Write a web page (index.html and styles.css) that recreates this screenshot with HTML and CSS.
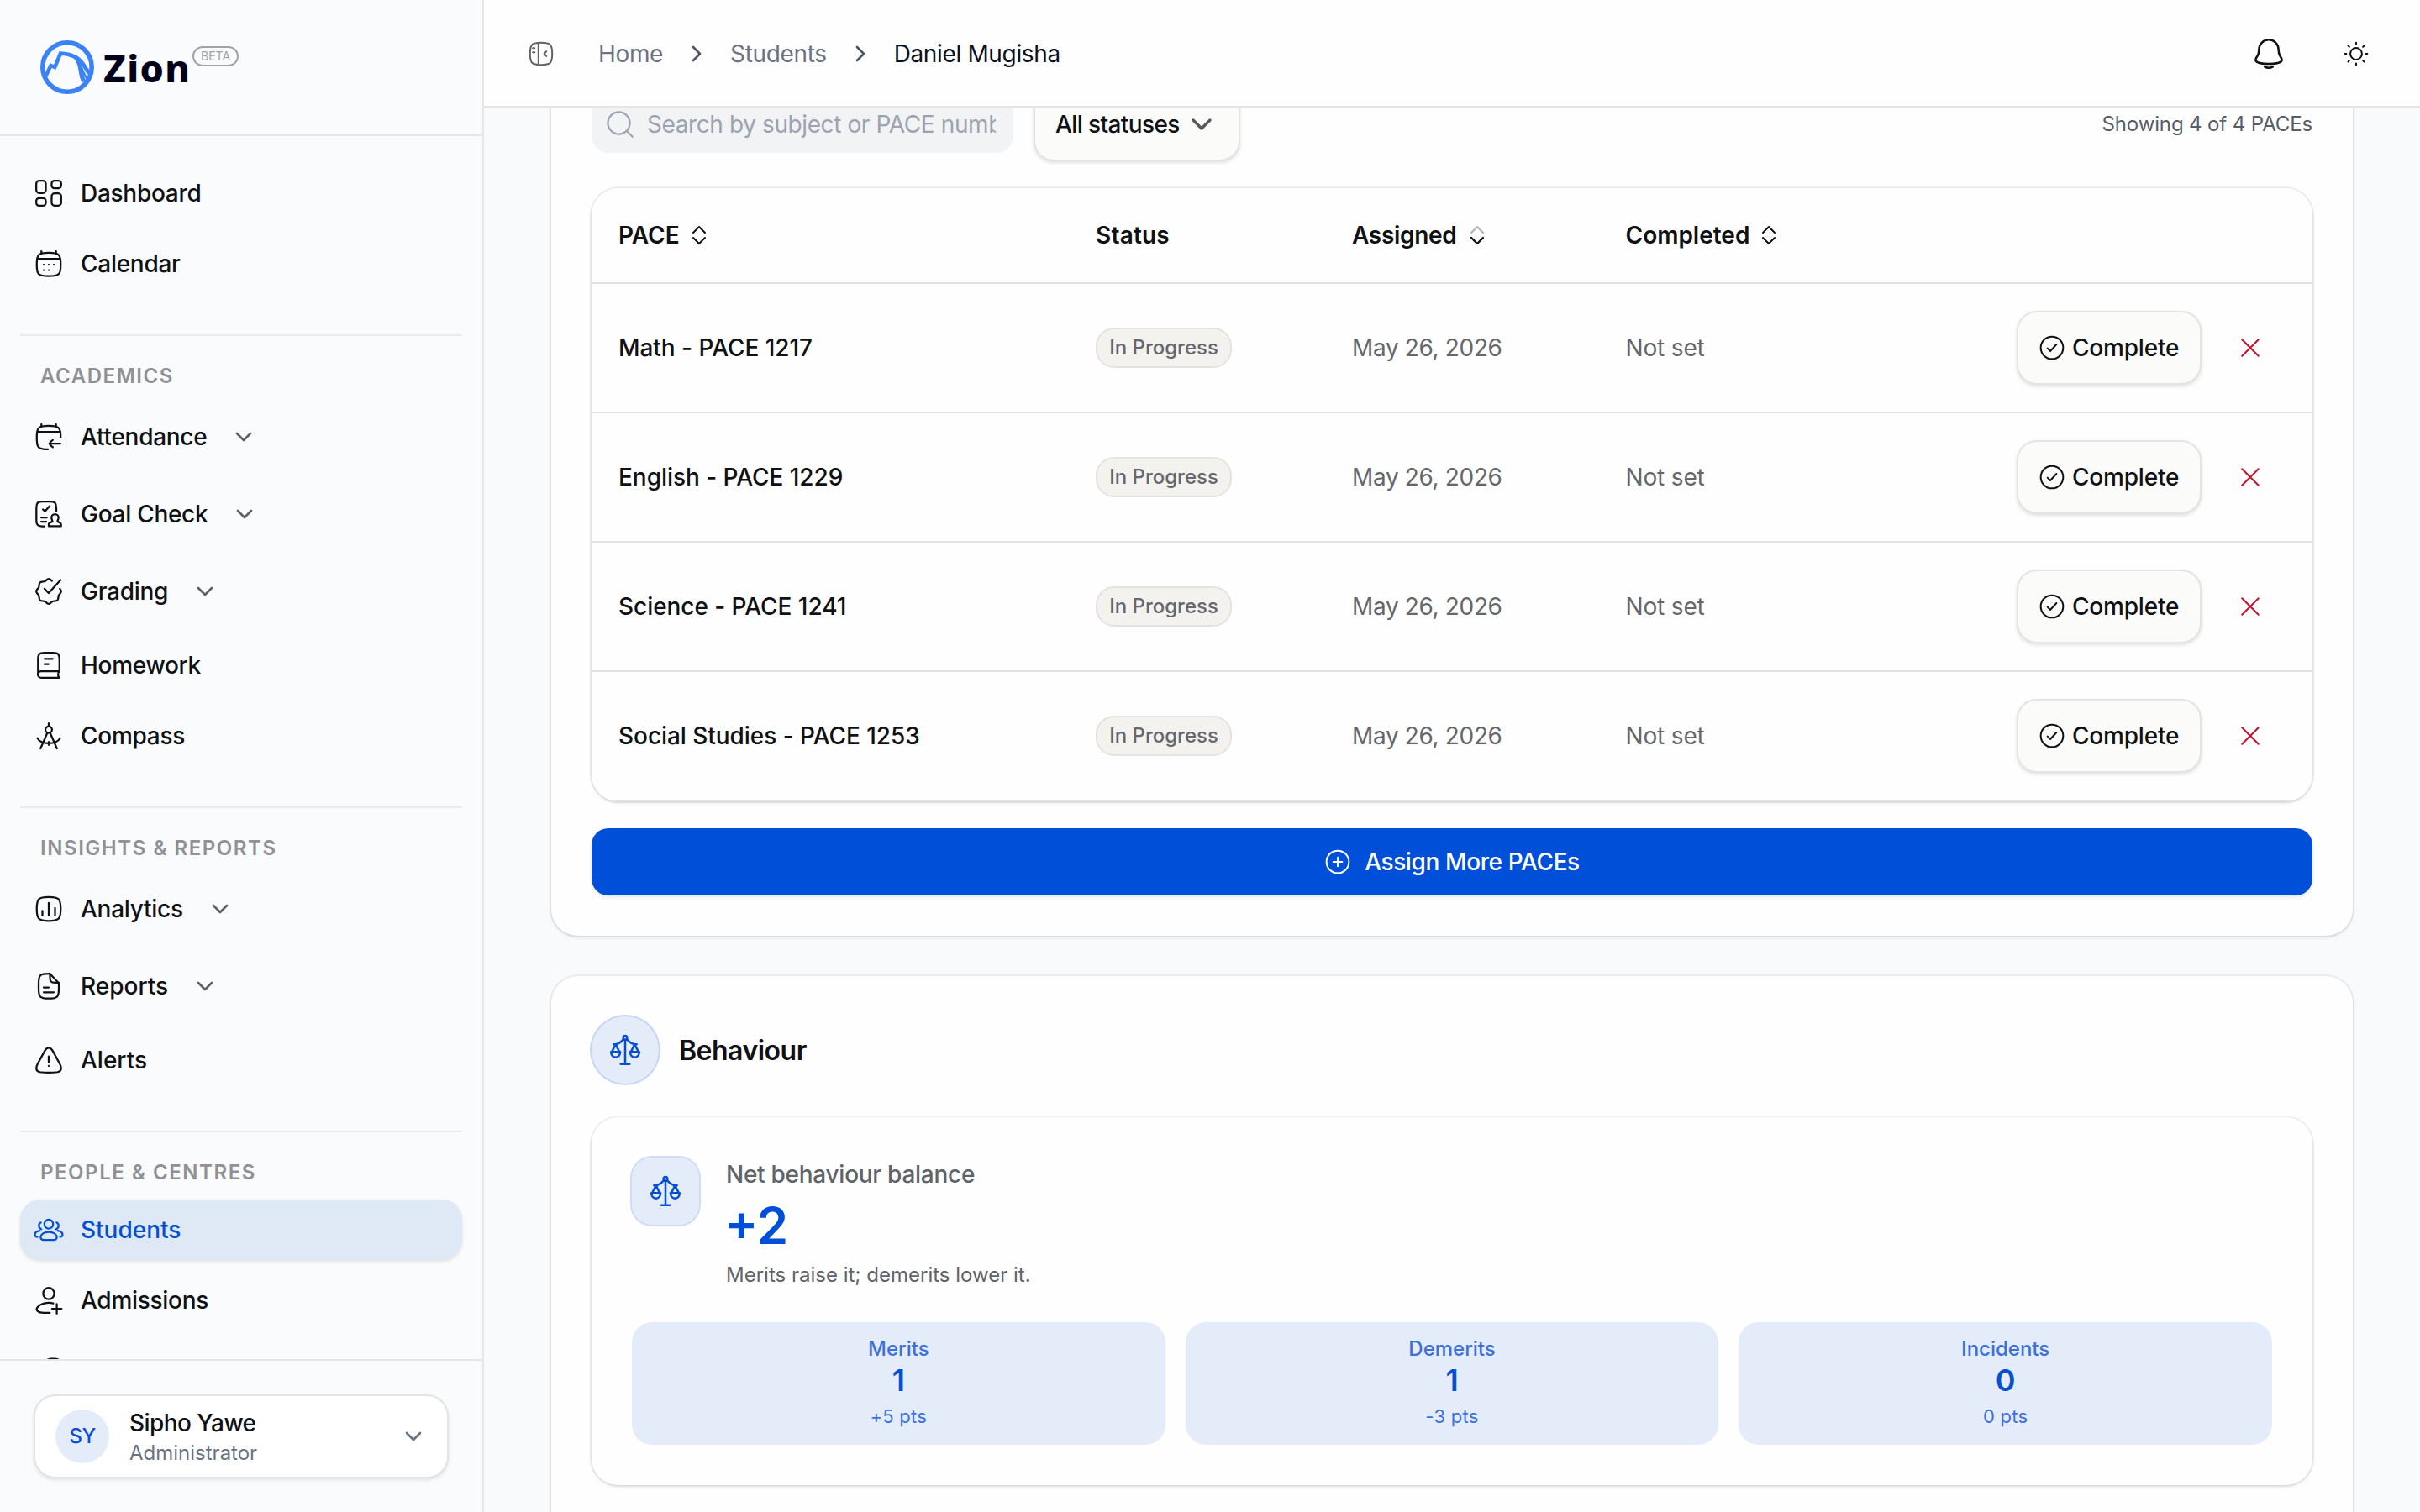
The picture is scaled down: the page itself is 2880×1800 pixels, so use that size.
FILE: index.html
```html
<!DOCTYPE html>
<html lang="en">
<head>
    <meta charset="UTF-8">
    <meta name="viewport" content="width=device-width, initial-scale=1.0">
    <title>Daniel Mugisha - Zion</title>
    <link rel="stylesheet" href="styles.css">
</head>
<body>
    <!-- Shared icons -->
    <svg class="sprite" width="0" height="0">
        <symbol id="i-dashboard" viewBox="0 0 24 24"><rect x="2.1" y="2.1" width="7.6" height="9.8" rx="2.4"/><rect x="14.3" y="2.1" width="7.6" height="6" rx="2.2"/><rect x="14.3" y="12.1" width="7.6" height="9.8" rx="2.4"/><rect x="2.1" y="15.9" width="7.6" height="6" rx="2.2"/></symbol>
        <symbol id="i-calendar" viewBox="0 0 24 24"><path d="M6.2 2v2.2M17.8 2v2.2M2.9 8h18.2"/><path d="M2.5 12.6c0-7.6.8-9.3 9.5-9.3s9.5 1.7 9.5 9.3-.8 9.2-9.5 9.2-9.5-1.6-9.5-9.2Z"/><path d="M8 12.7h.01M12 12.7h.01M16 12.7h.01M8 17h.01M12 17h.01"/></symbol>
        <symbol id="i-attendance" viewBox="0 0 24 24"><path d="M6.2 2v2.2M17.8 2v2.2M2.9 8h18.2"/><path d="M11.4 21.9c-8.1 0-8.9-1.7-8.9-9.3s.8-9.3 9.5-9.3 9.5 1.7 9.5 9.3"/><path d="M21.3 17.4h-8.7M15.2 14.6c-1.1.7-2.1 1.7-2.7 2.8.6 1.1 1.6 2.1 2.7 2.8"/></symbol>
        <symbol id="i-goal" viewBox="0 0 24 24"><path d="M18 9.6V7c0-3.8-1.1-5-4.8-5H7C3.3 2 2.2 3.2 2.2 7v10c0 3.7 1.1 4.7 6.3 4.8"/><path d="M7.4 8.3 9 9.8l3.7-4.2M6 14.7h4.5M6 18h4"/><path d="M14.2 14.8a2.8 2.8 0 0 1 5.6 0c0 1.5-.9 2.2-.9 3.2 1.6.5 2.9.5 2.9 2.4v1.2H12v-1.2c0-1.900 1.400-1.900 3-2.400 0-1-.8-1.700-.8-3.200Z"/></symbol>
        <symbol id="i-grading" viewBox="0 0 24 24"><path d="M14.6 3.7 13.3 2.6Q12 1.6 10.7 2.6L9.2 4 5.8 4.6Q4.8 4.9 4.6 5.9L4.1 8.9 2.5 10.8Q1.7 12 2.5 13.2L4.1 15.1 4.6 18.1Q4.8 19.1 5.8 19.4L9.2 20 10.7 21.4Q12 22.4 13.3 21.4L14.8 20 18.2 19.4Q19.2 19.1 19.4 18.1L19.9 15.1 21.5 13.2Q22.3 12 21.5 10.8L20.8 9.9"/><path d="m8.6 9.9 3.3 3.5L21.4 3"/></symbol>
        <symbol id="i-homework" viewBox="0 0 24 24"><path d="M20.5 16.7V7c0-3.8-1.2-5-5-5h-7c-3.8 0-5 1.2-5 5v12.4"/><path d="M20.5 16.7H6a2.6 2.6 0 0 0 0 5.2h14.5c-1.5-1.4-1.5-3.8 0-5.2ZM8.7 6.9h6.5M8.7 11.1h3.1"/></symbol>
        <symbol id="i-compass" viewBox="0 0 24 24"><circle cx="12" cy="7.2" r="2.6"/><path d="M12 4.5V2M10.9 9.7 5.5 22M13.1 9.7 18.5 22M3 13.8c3 5.4 15 5.4 18 0M12 16.8v2.4"/></symbol>
        <symbol id="i-analytics" viewBox="0 0 24 24"><path d="M2.5 12c0-7.8 1.2-9.5 9.5-9.5s9.5 1.7 9.5 9.5-1.2 9.5-9.5 9.5S2.5 19.8 2.5 12Z"/><path d="M7 13.5v3.6M12 7.2v9.9M17 11.3v5.8"/></symbol>
        <symbol id="i-reports" viewBox="0 0 24 24"><path d="M20 10.5V14c0 6.5-.9 7.8-8 7.8S4 20.5 4 14v-4C4 3.3 5 2.1 12 2.1h1L20 9.7Z"/><path d="M13 2.3V5c0 3.4.7 4.2 4 4.2h3M8 13h4M8 16.9h8"/></symbol>
        <symbol id="i-alert" viewBox="0 0 24 24"><path d="M12 2.2c-1.3 0-2.2.9-3 2.2L3.2 15c-1.6 3-1.5 6 1.8 6.5 4 .5 10 .5 14 0 3.3-.5 3.4-3.5 1.8-6.5L15 4.4c-.8-1.3-1.7-2.2-3-2.2Z"/><path d="M12 9v4.6M12 16.5v.1"/></symbol>
        <symbol id="i-students" viewBox="0 0 24 24"><ellipse cx="12" cy="7.5" rx="3.5" ry="3.6"/><path d="M5.6 17.9c0-2.4 2.9-4.2 6.4-4.2s6.4 1.8 6.4 4.2c0 1.5-1.2 2.2-2.6 2.2H8.2c-1.4 0-2.6-.7-2.6-2.2Z"/><path d="M5.8 6.2a2.9 2.9 0 0 0 .3 5.3M18.2 6.2a2.9 2.9 0 0 1-.3 5.3M4.9 12.8c-2.1.4-3.8 1.5-3.9 3 0 1 .7 1.7 2 1.9M19.1 12.8c2.1.4 3.8 1.5 3.9 3 0 1-.7 1.7-2 1.9"/></symbol>
        <symbol id="i-admissions" viewBox="0 0 24 24"><ellipse cx="12" cy="6.6" rx="4.4" ry="4.5"/><path d="M15.6 14.4c-4.6-1.2-10.4.2-12.7 3.4-1.4 2 .6 4.1 5.1 4.1h4.9M18.4 14.9v7.6M14.6 18.7h7.6"/></symbol>
        <symbol id="i-more" viewBox="0 0 24 24"><rect x="8" y="2.4" width="15" height="18" rx="6"/></symbol>
        <symbol id="i-down" viewBox="0 0 24 24"><path d="m6 9 6 6 6-6"/></symbol>
        <symbol id="i-right" viewBox="0 0 24 24"><path d="m9 6 6 6-6 6"/></symbol>
        <symbol id="i-panel" viewBox="0 0 24 24"><path d="M2.1 12c0-8.3 1.6-9.9 9.9-9.9s9.9 1.6 9.9 9.9-1.6 9.9-9.9 9.9S2.1 20.3 2.1 12ZM9.6 2.3v19.4M16.7 9.8 14.7 12l2 2.2M4.6 7h1.6M4.6 10.6h1.6"/></symbol>
        <symbol id="i-bell" viewBox="0 0 24 24"><path d="M12 2C8.2 2 5.2 5 5 8.9c-.1 1.9 0 2.9-.9 4.4-.6 1.1-1.5 2-1.5 3 0 2.1 5 2.9 9.4 2.9s9.4-.8 9.4-2.9c0-1-.9-1.9-1.5-3-.9-1.5-.8-2.5-.9-4.4C18.8 5 15.8 2 12 2ZM9.1 21.2c.8.5 1.8.8 2.9.8s2.1-.3 2.9-.8"/></symbol>
        <symbol id="i-sun" viewBox="0 0 24 24"><circle cx="12" cy="12" r="5.2"/><path d="M12 2v1.3M12 20.7V22M22 12h-1.3M3.3 12H2M19.1 4.9l-1 1M5.9 18.1l-1 1M19.1 19.1l-1-1M5.9 5.9l-1-1"/></symbol>
        <symbol id="i-search" viewBox="0 0 24 24"><circle cx="11" cy="11" r="8.7"/><path d="m17.5 17.5 4.3 4.3"/></symbol>
        <symbol id="i-check-circle" viewBox="0 0 24 24"><circle cx="12" cy="12" r="10"/><path d="M8 12.5 10.5 15 16 9"/></symbol>
        <symbol id="i-plus-circle" viewBox="0 0 24 24"><circle cx="12" cy="12" r="10"/><path d="M12 8v8M8 12h8"/></symbol>
        <symbol id="i-close" viewBox="0 0 24 24"><path d="m5.5 5.5 13 13M18.5 5.5l-13 13"/></symbol>
        <symbol id="i-scales" viewBox="0 0 24 24"><circle cx="12" cy="3.2" r="1.4"/><path d="M12 4.7V22M8.8 22h6.4M10.8 4.2C9.5 6 7.8 7.4 5.2 8M13.2 4.2c1.3 1.8 3 3.2 5.6 3.8M3.8 7.9h2.6M17.6 7.9h2.6M5.2 8.2 2.4 13.4M5.2 8.2 8 13.4M18.8 8.2l-2.8 5.2M18.8 8.2l2.8 5.2"/><path d="M1.9 13.4h6.6c0 2.3-1.4 3.8-3.3 3.8s-3.3-1.5-3.3-3.8ZM15.5 13.4h6.6c0 2.3-1.4 3.8-3.3 3.8s-3.3-1.5-3.3-3.8Z"/></symbol>
    </svg>

    <div class="app">
        <aside class="sidebar">
            <div class="brand">
                <svg class="brand-logo" viewBox="0 0 64 64">
                    <circle cx="32" cy="32" r="29.2" stroke-width="5.6"/>
                    <path d="M6.5 42.5 12.5 30l4.7 2L24 15.6c13 .4 22.500 5.400 28 14.400l6 9.500" stroke-width="4.6"/>
                    <path d="M41 19c6 6 6.5 13 7.8 20.5.8 4.5 1.7 7.5 3.2 9.5" stroke-width="5.2"/>
                    <path d="M46.5 24.5c2 9 5 15 9.5 22" stroke-width="2.6"/>
                </svg>
                <span class="brand-name">Zion</span>
                <span class="beta">BETA</span>
            </div>

            <nav class="nav">
                <div class="nav-section">
                    <a class="nav-item"><svg><use href="#i-dashboard"/></svg>Dashboard</a>
                    <a class="nav-item"><svg><use href="#i-calendar"/></svg>Calendar</a>
                </div>
                <div class="nav-section">
                    <h3>ACADEMICS</h3>
                    <a class="nav-item group"><svg><use href="#i-attendance"/></svg>Attendance<svg class="chev"><use href="#i-down"/></svg></a>
                    <a class="nav-item group"><svg><use href="#i-goal"/></svg>Goal Check<svg class="chev"><use href="#i-down"/></svg></a>
                    <a class="nav-item group"><svg><use href="#i-grading"/></svg>Grading<svg class="chev"><use href="#i-down"/></svg></a>
                    <a class="nav-item"><svg><use href="#i-homework"/></svg>Homework</a>
                    <a class="nav-item"><svg><use href="#i-compass"/></svg>Compass</a>
                </div>
                <div class="nav-section">
                    <h3>INSIGHTS &amp; REPORTS</h3>
                    <a class="nav-item group"><svg><use href="#i-analytics"/></svg>Analytics<svg class="chev"><use href="#i-down"/></svg></a>
                    <a class="nav-item group wide"><svg><use href="#i-reports"/></svg>Reports<svg class="chev"><use href="#i-down"/></svg></a>
                    <a class="nav-item wide"><svg><use href="#i-alert"/></svg>Alerts</a>
                </div>
                <div class="nav-section">
                    <h3>PEOPLE &amp; CENTRES</h3>
                    <a class="nav-item wide active"><svg><use href="#i-students"/></svg>Students</a>
                    <a class="nav-item"><svg><use href="#i-admissions"/></svg>Admissions</a>
                    <a class="nav-item"><svg><use href="#i-more"/></svg></a>
                </div>
            </nav>

            <div class="sidebar-footer">
                <div class="user-card">
                    <div class="avatar">SY</div>
                    <div class="user-text">
                        <div class="user-name">Sipho Yawe</div>
                        <div class="user-role">Administrator</div>
                    </div>
                    <svg class="chev"><use href="#i-down"/></svg>
                </div>
            </div>
        </aside>

        <div class="page">
            <header class="topbar">
                <svg class="panel-toggle"><use href="#i-panel"/></svg>
                <div class="breadcrumb">
                    <span>Home</span>
                    <svg><use href="#i-right"/></svg>
                    <span>Students</span>
                    <svg><use href="#i-right"/></svg>
                    <span class="current">Daniel Mugisha</span>
                </div>
                <svg class="bell"><use href="#i-bell"/></svg>
                <svg class="sun"><use href="#i-sun"/></svg>
            </header>

            <main class="main">
                <div class="content">
                    <section class="card">
                        <div class="filters">
                            <div class="search">
                                <svg><use href="#i-search"/></svg>
                                <div class="placeholder">Search by subject or PACE number</div>
                            </div>
                            <button class="btn select">All statuses<svg><use href="#i-down"/></svg></button>
                            <div class="count">Showing 4 of 4 PACEs</div>
                        </div>

                        <div class="table-wrap">
                            <table>
                                <thead>
                                    <tr>
                                        <th class="col-pace"><div class="th">PACE<svg viewBox="0 0 32 32"><path d="m9 13 7-7 7 7"/><path d="m9 19 7 7 7-7"/></svg></div></th>
                                        <th class="col-status"><div class="th loose">Status</div></th>
                                        <th class="col-assigned"><div class="th tight">Assigned<svg class="sorted" viewBox="0 0 32 32"><path class="dim" d="m9 13 7-7 7 7"/><path d="m9 19 7 7 7-7"/></svg></div></th>
                                        <th class="col-completed"><div class="th">Completed<svg viewBox="0 0 32 32"><path d="m9 13 7-7 7 7"/><path d="m9 19 7 7 7-7"/></svg></div></th>
                                        <th></th>
                                    </tr>
                                </thead>
                                <tbody>
                                    <tr>
                                        <td class="name">Math - PACE 1217</td>
                                        <td><span class="badge">In Progress</span></td>
                                        <td class="date">May 26, 2026</td>
                                        <td class="muted">Not set</td>
                                        <td><div class="actions"><button class="btn"><svg><use href="#i-check-circle"/></svg>Complete</button><svg class="remove"><use href="#i-close"/></svg></div></td>
                                    </tr>
                                    <tr>
                                        <td class="name">English - PACE 1229</td>
                                        <td><span class="badge">In Progress</span></td>
                                        <td class="date">May 26, 2026</td>
                                        <td class="muted">Not set</td>
                                        <td><div class="actions"><button class="btn"><svg><use href="#i-check-circle"/></svg>Complete</button><svg class="remove"><use href="#i-close"/></svg></div></td>
                                    </tr>
                                    <tr>
                                        <td class="name">Science - PACE 1241</td>
                                        <td><span class="badge">In Progress</span></td>
                                        <td class="date">May 26, 2026</td>
                                        <td class="muted">Not set</td>
                                        <td><div class="actions"><button class="btn"><svg><use href="#i-check-circle"/></svg>Complete</button><svg class="remove"><use href="#i-close"/></svg></div></td>
                                    </tr>
                                    <tr>
                                        <td class="name">Social Studies - PACE 1253</td>
                                        <td><span class="badge">In Progress</span></td>
                                        <td class="date">May 26, 2026</td>
                                        <td class="muted">Not set</td>
                                        <td><div class="actions"><button class="btn"><svg><use href="#i-check-circle"/></svg>Complete</button><svg class="remove"><use href="#i-close"/></svg></div></td>
                                    </tr>
                                </tbody>
                            </table>
                        </div>

                        <button class="assign-btn"><svg><use href="#i-plus-circle"/></svg>Assign More PACEs</button>
                    </section>

                    <section class="card behaviour">
                        <div class="card-head">
                            <div class="icon-round"><svg><use href="#i-scales"/></svg></div>
                            <h2>Behaviour</h2>
                        </div>

                        <div class="balance">
                            <div class="balance-top">
                                <div class="icon-square"><svg><use href="#i-scales"/></svg></div>
                                <div>
                                    <div class="balance-label">Net behaviour balance</div>
                                    <div class="balance-value">+2</div>
                                    <div class="balance-note">Merits raise it; demerits lower it.</div>
                                </div>
                            </div>
                            <div class="stats">
                                <div class="stat">
                                    <div class="stat-label">Merits</div>
                                    <div class="stat-value">1</div>
                                    <div class="stat-pts">+5 pts</div>
                                </div>
                                <div class="stat">
                                    <div class="stat-label">Demerits</div>
                                    <div class="stat-value">1</div>
                                    <div class="stat-pts">-3 pts</div>
                                </div>
                                <div class="stat">
                                    <div class="stat-label">Incidents</div>
                                    <div class="stat-value">0</div>
                                    <div class="stat-pts">0 pts</div>
                                </div>
                            </div>
                        </div>
                    </section>
                </div>
            </main>
        </div>
    </div>
</body>
</html>
```
FILE: styles.css
```css
* {
    box-sizing: border-box;
}
body {
    margin: 0;
    font-family: Inter, "Liberation Sans", sans-serif;
    font-size: 28px;
    line-height: 40px;
    color: #0f1115;
    background: #f9fafc;
    overflow: hidden;
}
h2, h3 {
    margin: 0;
}
svg {
    display: block;
    flex: none;
    fill: none;
    stroke: currentColor;
    stroke-width: 1.5;
    stroke-linecap: round;
    stroke-linejoin: round;
}
.sprite {
    position: absolute;
}
.app {
    display: flex;
    height: 1800px;
}

/* Sidebar */
.sidebar {
    width: 576px;
    flex: none;
    display: flex;
    flex-direction: column;
    background: #f9fbfd;
    border-right: 2px solid #e5e6e8;
}
.brand {
    display: flex;
    height: 162px;
    padding: 48px 48px 0;
    border-bottom: 2px solid #e5e6e8;
}
.brand-logo {
    width: 64px;
    height: 64px;
    color: #3b82f6;
    stroke-linecap: butt;
    stroke-linejoin: miter;
}
.brand-name {
    width: 115px;
    padding-left: 11px;
    font-family: "Noto Sans", "Open Sans", sans-serif;
    font-size: 45px;
    line-height: 66px;
    font-weight: 800;
    letter-spacing: 1.4px;
    color: #03001c;
}
.beta {
    height: 24px;
    margin: 7px 0 0 2px;
    padding: 0 8px;
    border: 2px solid #a3a3a3;
    border-radius: 12px;
    font-size: 14px;
    line-height: 20px;
    color: #a0a0a0;
}
.nav {
    flex: 1;
    min-height: 0;
    overflow: hidden;
    padding: 32px 24px 0;
}
.nav-section {
    display: flex;
    flex-direction: column;
    gap: 12px;
}
.nav-section + .nav-section {
    margin-top: 48px;
    border-top: 2px solid #e9eaec;
}
.nav-section h3 {
    padding: 32px 24px 4px;
    font-size: 24px;
    line-height: 32px;
    font-weight: 600;
    letter-spacing: 1.55px;
    color: #8f9195;
}
.nav-item {
    display: flex;
    align-items: center;
    height: 72px;
    padding: 0 16px;
    border-radius: 24px;
    font-weight: 500;
    letter-spacing: -0.28px;
}
.nav-item.wide {
    letter-spacing: 0;
}
.nav-item svg {
    width: 36px;
    height: 36px;
    margin-right: 20px;
}
.nav-item.group {
    height: 80px;
}
.nav-item .chev {
    width: 32px;
    height: 32px;
    margin: 0 0 0 28px;
}
.chev {
    width: 32px;
    height: 32px;
    color: #5f6165;
    stroke-width: 2;
}
.nav-item.active {
    background: #dfe9f6;
    color: #064fd0;
    box-shadow: 0 2px 4px rgba(0, 0, 0, 0.1);
}
.sidebar-footer {
    padding: 40px;
    border-top: 2px solid #e5e6e8;
}
.user-card {
    display: flex;
    align-items: center;
    height: 100px;
    padding: 0 24px;
    background: #fff;
    border: 2px solid #e3e4e6;
    border-radius: 26px;
    box-shadow: 0 2px 4px rgba(0, 0, 0, 0.1);
}
.avatar {
    width: 64px;
    height: 64px;
    border-radius: 50%;
    background: #e5ecf9;
    color: #064fd0;
    font-size: 24px;
    line-height: 64px;
    font-weight: 500;
    text-align: center;
    letter-spacing: -0.5px;
}
.user-text {
    flex: 1;
    margin-left: 24px;
    padding-top: 2px;
}
.user-name {
    font-weight: 500;
    line-height: 38px;
    letter-spacing: -0.55px;
}
.user-role {
    font-size: 24px;
    line-height: 34px;
    color: #6b7280;
}
.user-card .chev {
    color: #6b7280;
}

/* Top bar */
.page {
    flex: 1;
    min-width: 0;
    display: flex;
    flex-direction: column;
}
.topbar {
    display: flex;
    align-items: center;
    height: 128px;
    padding: 2px 60px 0 52px;
    background: #fefefe;
    border-bottom: 2px solid #e3e4e4;
}
.panel-toggle {
    width: 32px;
    height: 32px;
    color: #606266;
}
.breadcrumb {
    flex: 1;
    display: flex;
    align-items: center;
    gap: 24px;
    margin-left: 52px;
    color: #6b7280;
    letter-spacing: -0.35px;
}
.breadcrumb svg {
    width: 32px;
    height: 32px;
    color: #4b5563;
    stroke-width: 2;
}
.breadcrumb .current {
    color: #0b1020;
}
.bell {
    width: 40px;
    height: 40px;
}
.sun {
    width: 32px;
    height: 32px;
    margin-left: 68px;
}

/* Main content, scrolled part of the way down */
.main {
    flex: 1;
    min-height: 0;
    overflow: hidden;
}
.content {
    display: flex;
    flex-direction: column;
    gap: 48px;
    margin-top: -72px;
    padding: 0 80px;
}
.card {
    padding: 48px;
    background: #fefefe;
    border-radius: 32px;
    box-shadow: 0 0 0 2px rgba(0, 0, 0, 0.05), 0 2px 4px rgba(0, 0, 0, 0.1);
}
.filters {
    display: flex;
    align-items: center;
    height: 88px;
}
.search {
    display: flex;
    align-items: center;
    width: 502px;
    height: 68px;
    padding: 0 21px 0 16px;
    border-radius: 20px;
    background: #f1f3f5;
    color: #9ca3af;
}
.search svg {
    width: 36px;
    height: 36px;
}
.placeholder {
    flex: 1;
    margin-left: 14px;
    overflow: hidden;
    white-space: nowrap;
    letter-spacing: -0.4px;
}
.btn {
    display: flex;
    align-items: center;
    gap: 8px;
    width: 220px;
    height: 88px;
    padding: 0 24px;
    background: #fbfbf9;
    border: 2px solid #e4e4e2;
    border-radius: 24px;
    box-shadow: 0 2px 4px rgba(0, 0, 0, 0.12);
    font-family: inherit;
    font-size: 28px;
    font-weight: 500;
    letter-spacing: -0.2px;
    color: #0f1115;
}
.btn svg {
    width: 32px;
    height: 32px;
}
.btn.select {
    width: 246px;
    margin-left: 24px;
    justify-content: space-between;
    gap: 0;
    letter-spacing: -0.6px;
}
.btn.select svg {
    width: 40px;
    height: 40px;
    color: #55575b;
    stroke-width: 2;
}
.count {
    margin-left: auto;
    font-size: 24px;
    letter-spacing: -0.13px;
    color: #555d69;
}
.table-wrap {
    margin-top: 32px;
    overflow: hidden;
    border-radius: 32px;
    box-shadow: 0 0 0 2px rgba(0, 0, 0, 0.06), 0 2px 4px rgba(0, 0, 0, 0.1);
}
table {
    width: 100%;
    table-layout: fixed;
    border-collapse: separate;
    border-spacing: 0;
}
th, td {
    padding: 0 32px;
    border-bottom: 2px solid #e3e4e2;
    text-align: left;
    white-space: nowrap;
}
th {
    height: 114px;
    font-weight: 600;
}
td {
    height: 154px;
}
.col-pace {
    width: 568px;
}
.col-status {
    width: 305px;
}
.col-assigned {
    width: 325.5px;
}
.col-completed {
    width: 340px;
}
.th {
    display: flex;
    align-items: center;
    gap: 7px;
}
.th.tight {
    gap: 8px;
    letter-spacing: -0.3px;
}
.th.loose {
    letter-spacing: 0.2px;
}
.th svg {
    width: 32px;
    height: 32px;
    stroke-width: 2;
}
.th .sorted {
    stroke-width: 2.4;
}
.th .dim {
    opacity: 0.3;
}
.name {
    font-weight: 500;
    letter-spacing: -0.05px;
}
.badge {
    display: block;
    width: 162px;
    height: 48px;
    border: 2px solid #e4e3e0;
    border-radius: 22px;
    background: #f4f2ef;
    color: #65686d;
    font-size: 24px;
    line-height: 44px;
    font-weight: 500;
    text-align: center;
}
.date, .muted {
    color: #65676b;
}
.date {
    letter-spacing: -0.35px;
}
.muted {
    letter-spacing: -0.15px;
}
.actions {
    display: flex;
    align-items: center;
    justify-content: flex-end;
    padding-right: 24px;
}
.remove {
    width: 36px;
    height: 36px;
    margin-left: 40px;
    color: #c4122f;
    stroke-width: 1.4;
}
.assign-btn {
    display: flex;
    align-items: center;
    justify-content: center;
    gap: 16px;
    width: 100%;
    height: 80px;
    margin-top: 32px;
    border: 0;
    border-radius: 20px;
    background: #004fd9;
    box-shadow: 0 2px 4px rgba(0, 0, 0, 0.1);
    color: #fff;
    font-family: inherit;
    font-size: 28px;
    font-weight: 500;
    letter-spacing: -0.4px;
}
.assign-btn svg {
    width: 32px;
    height: 32px;
}

/* Behaviour */
.card.behaviour {
    padding-bottom: 120px;
}
.card-head {
    display: flex;
    align-items: center;
    gap: 24px;
}
.icon-round, .icon-square {
    display: flex;
    align-items: center;
    justify-content: center;
    flex: none;
    width: 80px;
    height: 80px;
    border-radius: 50%;
    background: #e5ecf9;
    box-shadow: 0 0 0 2px #c6d6f3;
    color: #064fd0;
}
.icon-square {
    border-radius: 24px;
    box-shadow: 0 0 0 2px #d0dcf3;
}
.icon-round svg, .icon-square svg {
    width: 40px;
    height: 40px;
}
.card-head h2 {
    padding-top: 2px;
    font-size: 32px;
    font-weight: 600;
    letter-spacing: -0.5px;
}
.balance {
    margin-top: 40px;
    padding: 48px;
    border-radius: 32px;
    box-shadow: 0 0 0 2px rgba(0, 0, 0, 0.05), 0 2px 4px rgba(0, 0, 0, 0.1);
}
.balance-top {
    display: flex;
    gap: 32px;
}
.balance-label {
    font-weight: 500;
    letter-spacing: -0.27px;
    color: #606368;
}
.balance-value {
    margin: 11px 0 13px -2px;
    font-size: 60px;
    line-height: 60px;
    font-weight: 600;
    color: #004fd9;
}
.balance-note {
    font-size: 24px;
    line-height: 32px;
    color: #606368;
}
.stats {
    display: grid;
    grid-template-columns: repeat(3, 1fr);
    gap: 24px;
    margin-top: 40px;
}
.stat {
    height: 146px;
    padding-top: 16px;
    border-radius: 24px;
    background: #e5ecf9;
    text-align: center;
    color: #3b71d9;
}
.stat-label {
    font-size: 24px;
    line-height: 32px;
    font-weight: 500;
}
.stat-value {
    font-size: 36px;
    line-height: 42px;
    font-weight: 600;
    color: #064fd0;
}
.stat-pts {
    margin-top: 6px;
    font-size: 22px;
    line-height: 32px;
    letter-spacing: 0.28px;
}
```
